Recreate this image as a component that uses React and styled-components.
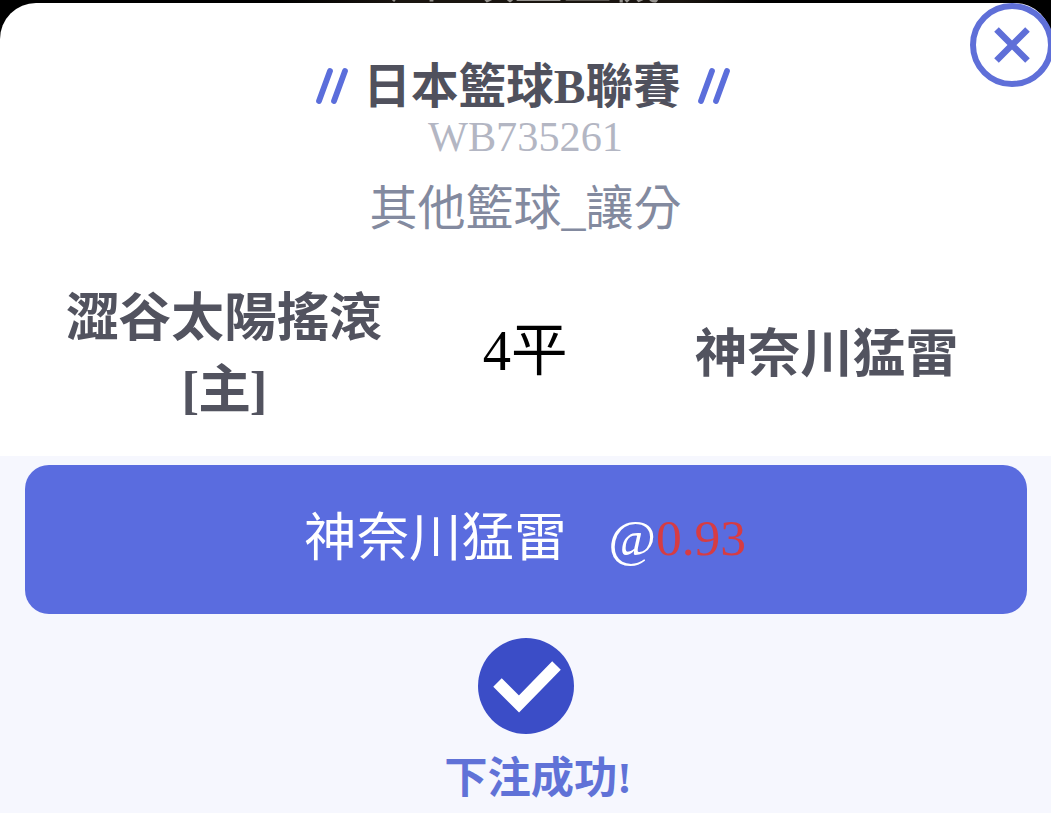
import React from "react";
import styled, { createGlobalStyle } from "styled-components";

const GlobalStyle = createGlobalStyle`
  * {
    box-sizing: border-box;
  }
  body {
    margin: 0;
    background: #000;
    font-family: "Liberation Serif", "Noto Sans CJK TC", serif;
  }
`;

const Screen = styled.div`
  position: relative;
  width: 1051px;
  height: 813px;
  padding-top: 3px;
  overflow: hidden;
  background: linear-gradient(90deg, #000 0, #000 280px, #1a1510 400px, #1a1510 680px, #000 760px);
`;

const PageTitle = styled.div`
  position: absolute;
  top: -44px;
  left: 0;
  width: 100%;
  font-size: 49px;
  line-height: 52px;
  text-align: center;
  word-spacing: 14px;
  color: #96938f;
`;

const Modal = styled.main`
  position: relative;
  display: flex;
  flex-direction: column;
  height: 810px;
  border-radius: 36px 36px 0 0;
  background: #fff;
`;

const CloseButton = styled.button`
  position: absolute;
  top: 0;
  right: -3px;
  width: 84px;
  height: 84px;
  padding: 0;
  border: 6px solid #5f6fd8;
  border-radius: 50%;
  background: #fff;
  svg {
    display: block;
  }
`;

const Header = styled.header`
  display: flex;
  flex-direction: column;
  align-items: center;
  height: 257px;
  padding-top: 56px;
`;

const TitleRow = styled.div`
  display: flex;
  align-items: center;
  gap: 16px;
  height: 56px;
  margin-right: 5px;
  svg {
    margin-top: -3px;
  }
`;

const Title = styled.h1`
  margin: 0 1px 0 -1px;
  font-size: 47.6px;
  line-height: 56px;
  color: #50515d;
`;

const OrderNumber = styled.div`
  height: 44px;
  font-size: 42.3px;
  line-height: 44px;
  color: #b3b6c3;
`;

const BetType = styled.div`
  margin-top: 20px;
  font-size: 48px;
  line-height: 60px;
  color: #838a9f;
`;

const Teams = styled.section`
  display: grid;
  grid-template-columns: 448px 154px 1fr;
  align-items: center;
  height: 196px;
  padding-bottom: 8px;
  text-align: center;
`;

const Team = styled.div`
  font-size: 52.7px;
  font-weight: 700;
  line-height: 72px;
  color: #52535f;
`;

const HomeMark = styled.div`
  letter-spacing: -1px;
`;

const Handicap = styled.div`
  padding-bottom: 6px;
  font-size: 56.5px;
  line-height: 74px;
  color: #000;
`;

const Footer = styled.section`
  display: flex;
  flex: 1;
  flex-direction: column;
  align-items: center;
  padding: 9px 24px 0 25px;
  background: #f6f7fe;
`;

const Bet = styled.div`
  display: flex;
  align-items: center;
  justify-content: center;
  gap: 42px;
  width: 100%;
  height: 149px;
  padding: 0 2px 3px 0;
  border-radius: 24px;
  background: #5a6cdf;
  font-size: 52.5px;
  line-height: 74px;
  color: #fff;
`;

const Price = styled.span`
  font-size: 51.5px;
`;

const Odds = styled.span`
  color: #d63c43;
`;

const CheckIcon = styled.svg`
  width: 96px;
  height: 96px;
  margin-top: 24px;
`;

const Success = styled.div`
  margin: 14px 0 0 24px;
  font-size: 43.3px;
  font-weight: 700;
  line-height: 60px;
  color: #6072d7;
`;

function Slashes() {
  return (
    <svg width="32" height="38" viewBox="0 0 32 38" stroke="#5b6edb" strokeWidth="5.8" strokeLinecap="round">
      <path d="M3 34 14 4M18 34 29 4" />
    </svg>
  );
}

export default function App() {
  return (
    <Screen>
      <GlobalStyle />
      <PageTitle>川 頭里主機</PageTitle>
      <Modal>
        <Header>
          <TitleRow>
            <Slashes />
            <Title>日本籃球B聯賽</Title>
            <Slashes />
          </TitleRow>
          <OrderNumber>WB735261</OrderNumber>
          <BetType>其他籃球_讓分</BetType>
        </Header>
        <Teams>
          <Team>
            澀谷太陽搖滾
            <HomeMark>[主]</HomeMark>
          </Team>
          <Handicap>4平</Handicap>
          <Team>神奈川猛雷</Team>
        </Teams>
        <Footer>
          <Bet>
            <span>神奈川猛雷</span>
            <Price>
              @<Odds>0.93</Odds>
            </Price>
          </Bet>
          <CheckIcon viewBox="0 0 96 96">
            <circle cx="48" cy="48" r="48" fill="#3b4dc7" />
            <path d="M19.5 44.5 41 66 78.5 27.5" fill="none" stroke="#fff" strokeWidth="12" />
          </CheckIcon>
          <Success>下注成功!</Success>
        </Footer>
        <CloseButton aria-label="關閉">
          <svg width="72" height="72" viewBox="0 0 72 72" stroke="#5f6fd8" strokeWidth="6.5">
            <path d="M20.5 20.5 51.5 51.5M51.5 20.5 20.5 51.5" />
          </svg>
        </CloseButton>
      </Modal>
    </Screen>
  );
}
